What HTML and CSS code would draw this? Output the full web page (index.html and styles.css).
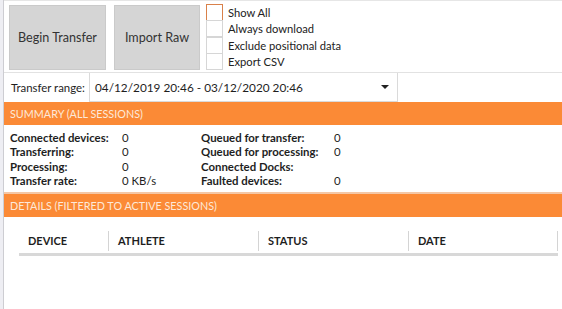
FILE: index.html
```html
<!DOCTYPE html>
<html lang="en">
<head>
  <meta charset="UTF-8">
  <title>Transfer</title>
  <link rel="stylesheet" href="styles.css">
</head>
<body>
  <div class="app">
    <div class="toolbar">
      <button class="big-btn begin">Begin Transfer</button>
      <button class="big-btn import">Import Raw</button>
      <div class="options">
        <label class="opt"><span class="box focus"></span>Show All</label>
        <label class="opt"><span class="box"></span>Always download</label>
        <label class="opt"><span class="box"></span>Exclude positional data</label>
        <label class="opt"><span class="box"></span>Export CSV</label>
      </div>
    </div>

    <div class="range-row">
      <span class="range-label">Transfer range:</span>
      <div class="range-select">
        <span>04/12/2019 20:46 - 03/12/2020 20:46</span>
        <span class="caret"></span>
      </div>
    </div>

    <div class="section-head">SUMMARY (ALL SESSIONS)</div>
    <div class="summary">
      <div class="stat-col">
        <div class="stat"><b>Connected devices:</b><span>0</span></div>
        <div class="stat"><b>Transferring:</b><span>0</span></div>
        <div class="stat"><b>Processing:</b><span>0</span></div>
        <div class="stat"><b>Transfer rate:</b><span>0 KB/s</span></div>
      </div>
      <div class="stat-col right">
        <div class="stat"><b>Queued for transfer:</b><span>0</span></div>
        <div class="stat"><b>Queued for processing:</b><span>0</span></div>
        <div class="stat"><b>Connected Docks:</b><span></span></div>
        <div class="stat"><b>Faulted devices:</b><span>0</span></div>
      </div>
    </div>

    <div class="section-head details">DETAILS (FILTERED TO ACTIVE SESSIONS)</div>
    <div class="grid">
      <div class="grid-head">
        <div class="col c-device">DEVICE</div>
        <div class="col c-athlete">ATHLETE</div>
        <div class="col c-status">STATUS</div>
        <div class="col c-date">DATE</div>
      </div>
    </div>
  </div>
</body>
</html>
```

FILE: styles.css
```css
* { margin: 0; padding: 0; box-sizing: border-box; }
html { background: #eeeef3; }
body {
  font-family: 'Lato', 'Open Sans', sans-serif;
  color: #1e1e1e;
  font-size: 11.5px;
  white-space: nowrap;
}
.app {
  margin-left: 3px;
  border-left: 1px solid #cdcdd2;
  background: #fff;
  min-height: 100vh;
  overflow: hidden;
}

/* Top toolbar */
.toolbar {
  display: flex;
  padding: 4px 0 0 5px;
  height: 73px;
  border-top: 1px solid #e6e6e6;
  border-bottom: 1px solid #e2e2e2;
}
.big-btn {
  height: 65px;
  background: #d5d5d5;
  border: 1px solid #cacaca;
  font-family: inherit;
  font-size: 12.6px;
  color: #333;
}
.begin { width: 97px; margin-right: 8px; }
.import { width: 86px; }
.options {
  margin-left: 6px;
  margin-top: -1px;
  display: flex;
  flex-direction: column;
}
.opt {
  display: flex;
  align-items: center;
  height: 16.5px;
  font-size: 11.2px;
  color: #222;
}
.box {
  width: 17px;
  height: 17px;
  border: 1px solid #d6d6d6;
  margin-right: 5px;
  background: #fff;
}
.box.focus { border-color: #d9814a; }

/* Range row */
.range-row {
  display: flex;
  align-items: center;
  height: 29px;
}
.range-label {
  padding-left: 7px;
  width: 85px;
  font-size: 11.4px;
}
.range-select {
  width: 309px;
  height: 29px;
  border: 1px solid #dadada;
  border-top: none;
  display: flex;
  align-items: center;
  justify-content: space-between;
  padding: 0 7px 0 5px;
  font-size: 11.8px;
}
.caret {
  width: 0;
  height: 0;
  border-left: 4px solid transparent;
  border-right: 4px solid transparent;
  border-top: 4px solid #222;
  margin-right: 1px;
}

/* Section headers */
.section-head {
  background: #fb8a36;
  color: #fde9d9;
  font-size: 10.8px;
  height: 23px;
  line-height: 23px;
  padding-left: 8px;
  margin-left: -2px;
}
.section-head.details {
  border-top: 2px solid #f4c7a6;
  height: 25px;
  line-height: 23px;
  margin-top: 1px;
}

/* Summary */
.summary {
  display: flex;
  padding: 6px 0 1px 6px;
  height: 66px;
}
.stat-col { width: 191px; }
.stat {
  display: flex;
  height: 14.4px;
  line-height: 14.4px;
  font-size: 11.4px;
}
.stat b { width: 112px; font-weight: 700; }
.stat-col.right .stat b { width: 133px; }

/* Details grid */
.grid { padding: 14px 0 0 15px; }
.grid-head {
  display: flex;
  height: 25px;
  border-bottom: 3px solid #d8d8d8;
  width: 539px;
}
.col {
  font-weight: 700;
  font-size: 11px;
  padding-left: 9px;
  padding-top: 3px;
  border-right: 1px solid #d4d4d4;
  margin-bottom: 2px;
}
.c-device { width: 90px; }
.c-athlete { width: 150px; }
.c-status { width: 150px; }
.c-date { width: 149px; }
```
